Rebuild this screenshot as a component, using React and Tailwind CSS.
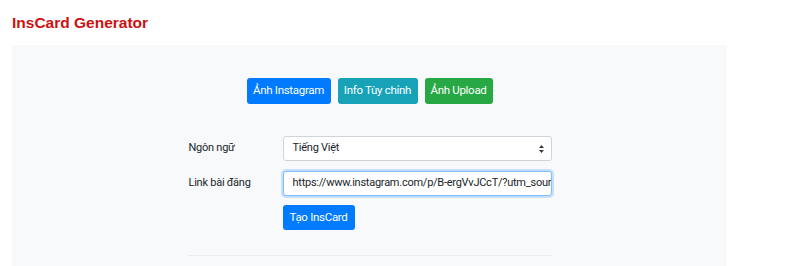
export default function App() {
  return (
    <div className="min-h-[266px] bg-white font-['Roboto','Liberation_Sans',sans-serif] text-[#212529]">
      <h1 className="px-3 pt-[11px] pb-[10px] text-[15.5px] font-bold leading-[24px] text-[#cc1111] font-['Liberation_Sans',Arial,sans-serif]">
        InsCard Generator
      </h1>
      <div className="ml-3 w-[715px] min-h-[221px] bg-[#f8f9fa] pt-[33px]">
        <div className="flex justify-center gap-[7px] text-[11.5px] tracking-[-0.3px]">
          <button className="h-[26px] w-[84px] rounded-[3px] bg-[#007bff] text-white">Ảnh Instagram</button>
          <button className="h-[26px] w-[80px] rounded-[3px] bg-[#17a2b8] text-white">Info Tùy chỉnh</button>
          <button className="h-[26px] w-[68px] rounded-[3px] bg-[#28a745] text-white">Ảnh Upload</button>
        </div>
        <div className="mx-auto mt-[32px] w-[364px] text-[11px] tracking-[-0.25px]">
          <div className="flex items-center">
            <label className="w-[95px] pl-px">Ngôn ngữ</label>
            <div className="flex h-[25px] flex-1 items-center justify-between rounded-[3px] border border-[#ced4da] bg-white pl-[9px] pr-[6px]">
              <span>Tiếng Việt</span>
              <svg width="7" height="10" viewBox="0 0 7 10">
                <path d="M3.5 1 L6 4 H1 Z M3.5 9 L6 6 H1 Z" fill="#343a40" />
              </svg>
            </div>
          </div>
          <div className="mt-[10px] flex items-center">
            <label className="w-[95px] pl-px">Link bài đăng</label>
            <div className="flex h-[25px] flex-1 items-center overflow-hidden whitespace-nowrap rounded-[3px] border border-[#80bdff] bg-white pl-[9px] shadow-[0_0_0_2px_rgba(0,123,255,0.2)]">
              https://www.instagram.com/p/B-ergVvJCcT/?utm_sour
            </div>
          </div>
          <div className="mt-[9px] pl-[95px]">
            <button className="h-[25px] w-[72px] rounded-[3px] bg-[#007bff] text-[11.5px] tracking-[-0.3px] text-white">Tạo InsCard</button>
          </div>
          <div className="mt-[25px] border-t border-[#e9ecef]" />
        </div>
      </div>
    </div>
  );
}
